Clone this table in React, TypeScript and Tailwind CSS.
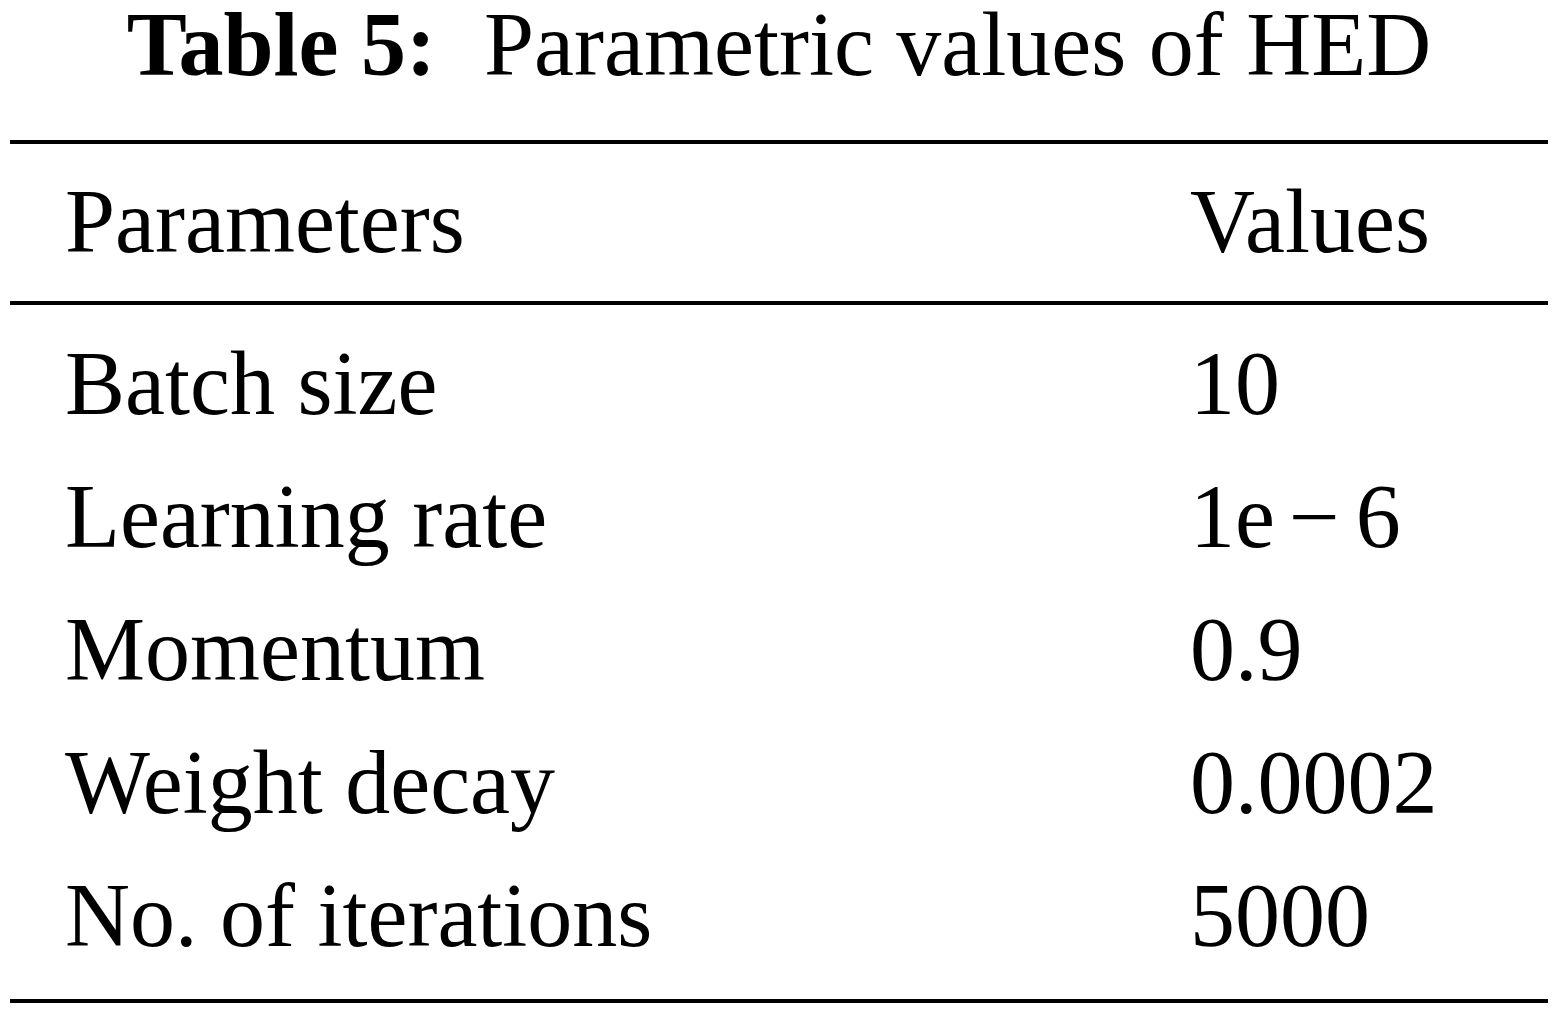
import React from "react";

const rows: [string, React.ReactNode][] = [
  ["Batch size", "10"],
  [
    "Learning rate",
    <span>
      1e<span className="ml-[14px]">−</span>
      <span className="ml-[16px]">6</span>
    </span>,
  ],
  ["Momentum", "0.9"],
  ["Weight decay", "0.0002"],
  ["No. of iterations", "5000"],
];

export default function App() {
  return (
    <div className="w-[1558px] h-[1014px] bg-white text-black font-['Liberation_Serif',serif] overflow-hidden">
      <div className="h-[110px] -mt-[10px] text-[90px] leading-[110px] text-center whitespace-nowrap">
        <span className="font-bold">Table 5:</span>
        <span className="ml-[48px]">Parametric values of HED</span>
      </div>
      <div className="mx-[10px] mt-[40px] border-t-4 border-black">
        <div className="grid grid-cols-[1125px_1fr] pl-[55px] pt-[11px] pb-[13px] text-[90px] leading-[133px]">
          <div>Parameters</div>
          <div>Values</div>
        </div>
        <div className="border-t-4 border-black pt-[12px] pb-[17px]">
          {rows.map(([k, v], i) => (
            <div
              key={i}
              className="grid grid-cols-[1125px_1fr] pl-[55px] text-[90px] leading-[133px] whitespace-nowrap"
            >
              <div>{k}</div>
              <div>{v}</div>
            </div>
          ))}
        </div>
        <div className="border-t-4 border-black" />
      </div>
    </div>
  );
}
